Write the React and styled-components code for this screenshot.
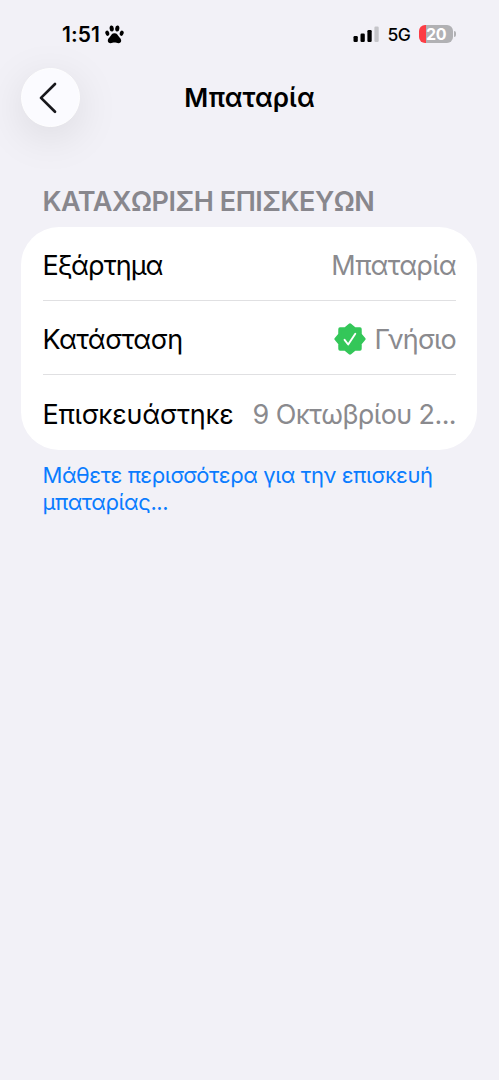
import React from 'react';
import styled, { createGlobalStyle } from 'styled-components';

const GlobalStyle = createGlobalStyle`
  * { box-sizing: border-box; }
  body {
    margin: 0;
    background: #f2f1f7;
    font-family: Inter, "Liberation Sans", sans-serif;
    color: #000;
  }
`;

const Screen = styled.main`
  min-height: 1080px;
  background: #f2f1f7;
  overflow: hidden;
`;

const StatusBar = styled.header`
  display: flex;
  justify-content: space-between;
  align-items: center;
  height: 68px;
  padding: 0 43px 0 62px;
`;

const StatusGroup = styled.div`
  display: flex;
  align-items: center;
`;

const Clock = styled.span`
  font-size: 21px;
  font-weight: 600;
  line-height: 24px;
  letter-spacing: 0.1px;
  margin-right: 5px;
  padding-top: 1px;
`;

const Network = styled.span`
  font-size: 17.5px;
  font-weight: 500;
  line-height: 24px;
  letter-spacing: -0.4px;
  margin: 1px 8.5px 0 8px;
`;

const Battery = styled.div`
  display: flex;
  align-items: center;
  justify-content: center;
  width: 34px;
  height: 18px;
  border-radius: 6px;
  background: linear-gradient(to right, #fc3d45 7px, #b1b1b4 7px);
  color: #fff;
  font-size: 16px;
  font-weight: 700;
  line-height: 18px;
  letter-spacing: -0.5px;
`;

const BatteryTip = styled.div`
  width: 2px;
  height: 6px;
  margin-left: 1px;
  border-radius: 0 2px 2px 0;
  background: #b1b1b4;
`;

const NavBar = styled.nav`
  display: grid;
  grid-template-columns: 59px 1fr 59px;
  align-items: center;
  height: 59px;
  padding: 0 21px;
`;

const BackButton = styled.button`
  display: flex;
  align-items: center;
  justify-content: center;
  width: 59px;
  height: 59px;
  padding: 0 3px 0 0;
  border: 1px solid #fff;
  border-radius: 50%;
  background: #fbfbff;
  box-shadow: 0 10px 44px rgba(0, 0, 0, 0.1);
`;

const Title = styled.h1`
  margin: 0;
  text-align: center;
  font-size: 26px;
  font-weight: 600;
  line-height: 32px;
  letter-spacing: ${(p) => p.$tracking}px;
`;

const Section = styled.section`
  padding: 58px 22px 0 21px;
`;

const SectionTitle = styled.h2`
  margin: 0 0 9px 21.5px;
  height: 33px;
  font-size: 27px;
  font-weight: 600;
  line-height: 33px;
  white-space: nowrap;
  color: #88878d;
  letter-spacing: ${(p) => p.$tracking}px;
`;

const Card = styled.div`
  padding: 0 21px 0 21.5px;
  border-radius: 38px;
  background: #fff;
`;

const Row = styled.div`
  display: flex;
  align-items: center;
  justify-content: space-between;
  height: ${(p) => p.$height}px;
  font-size: 27px;
  line-height: 34px;
  white-space: nowrap;
  & + & { border-top: 1px solid #e0e0e2; }
`;

const Label = styled.span`
  letter-spacing: ${(p) => p.$tracking}px;
  padding-top: 5px;
`;

const Value = styled.span`
  display: flex;
  align-items: center;
  color: #8a8a8e;
  padding-top: 5px;
  letter-spacing: ${(p) => p.$tracking}px;
`;

const Seal = styled.svg`
  margin: -3px 8.5px 0 0;
`;

const LearnMore = styled.a`
  display: block;
  margin: 12px 21px 0 21.5px;
  color: #0a7cff;
  font-size: 22px;
  line-height: 27px;
  letter-spacing: ${(p) => p.$tracking}px;
`;

const Paw = () => (
  <svg width="19" height="19" viewBox="0 0 19 19" fill="#000">
    <ellipse cx="6.7" cy="3.5" rx="2.1" ry="3" transform="rotate(-6 6.7 3.5)" />
    <ellipse cx="12.3" cy="3.5" rx="2.1" ry="3" transform="rotate(6 12.3 3.5)" />
    <ellipse cx="2.3" cy="8.2" rx="1.9" ry="2.7" transform="rotate(-18 2.3 8.2)" />
    <ellipse cx="16.7" cy="8.2" rx="1.9" ry="2.7" transform="rotate(18 16.7 8.2)" />
    <path d="M9.5 8.2C12.2 8.2 12.9 10.3 14 11.8C15 13.1 16.2 14 16.2 15.7C16.2 17.3 15 18.2 13.5 18.2C12 18.2 11 17.5 9.5 17.5C8 17.5 7 18.2 5.5 18.2C4 18.2 2.8 17.3 2.8 15.7C2.8 14 4 13.1 5 11.8C6.1 10.3 6.8 8.2 9.5 8.2Z" />
  </svg>
);

const Signal = () => (
  <svg width="26" height="16" viewBox="0 0 26 16">
    <rect x="0.5" y="10" width="4.3" height="6" rx="1.2" />
    <rect x="7.5" y="7.5" width="4.3" height="8.5" rx="1.2" />
    <rect x="14.4" y="4" width="4.3" height="12" rx="1.2" />
    <rect x="21.4" y="0.5" width="4.3" height="15.5" rx="1.2" fill="#c5c5c9" />
  </svg>
);

const Chevron = () => (
  <svg width="20" height="32" viewBox="0 0 20 32" fill="none">
    <path d="M16 2L2 15.9L16 29.8" stroke="#18181c" strokeWidth="2.7" strokeLinecap="round" strokeLinejoin="round" />
  </svg>
);

const VerifiedSeal = () => (
  <Seal width="32" height="32" viewBox="0 0 32 32">
    <path
      d="M16 2.1L20.5 5.9L26 6L26.1 11.5L29.9 16L26.1 20.5L26 26L20.5 26.1L16 29.9L11.5 26.1L6 26L5.9 20.5L2.1 16L5.9 11.5L6 6L11.5 5.9Z"
      fill="#34c759"
      stroke="#34c759"
      strokeWidth="3.4"
      strokeLinejoin="round"
    />
    <path d="M10.6 16.8L14.2 21.5L21.3 10.7" fill="none" stroke="#fff" strokeWidth="1.9" strokeLinecap="round" strokeLinejoin="round" />
  </Seal>
);

export default function App() {
  return (
    <Screen>
      <GlobalStyle />
      <StatusBar>
        <StatusGroup>
          <Clock>1:51</Clock>
          <Paw />
        </StatusGroup>
        <StatusGroup>
          <Signal />
          <Network>5G</Network>
          <Battery>20</Battery>
          <BatteryTip />
        </StatusGroup>
      </StatusBar>
      <NavBar>
        <BackButton aria-label="Πίσω">
          <Chevron />
        </BackButton>
        <Title $tracking={0.05}>Μπαταρία</Title>
      </NavBar>
      <Section>
        <SectionTitle $tracking={-0.46}>ΚΑΤΑΧΩΡΙΣΗ ΕΠΙΣΚΕΥΩΝ</SectionTitle>
        <Card>
          <Row $height={73}>
            <Label $tracking={-0.95}>Εξάρτημα</Label>
            <Value $tracking={-0.75}>Μπαταρία</Value>
          </Row>
          <Row $height={74}>
            <Label $tracking={-0.6}>Κατάσταση</Label>
            <Value $tracking={-0.8}>
              <VerifiedSeal />
              Γνήσιο
            </Value>
          </Row>
          <Row $height={75.5}>
            <Label $tracking={-0.25}>Επισκευάστηκε</Label>
            <Value $tracking={-0.6}>9 Οκτωβρίου 2...</Value>
          </Row>
        </Card>
        <LearnMore $tracking={-0.43}>
          Μάθετε περισσότερα για την επισκευή μπαταρίας...
        </LearnMore>
      </Section>
    </Screen>
  );
}
